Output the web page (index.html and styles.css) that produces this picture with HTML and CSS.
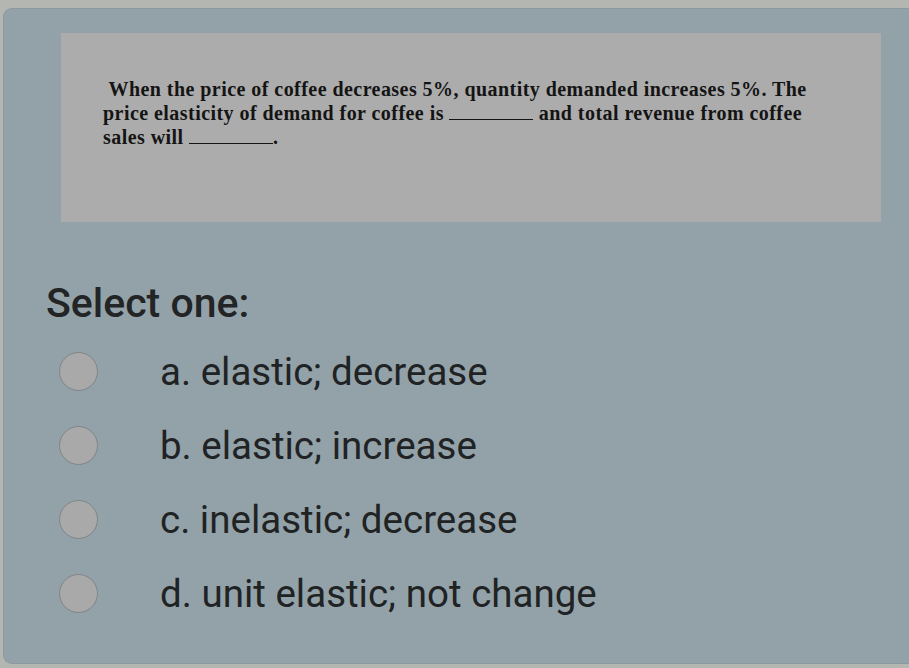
FILE: index.html
```html
<!DOCTYPE html>
<html>
<head>
<meta charset="utf-8">
<link rel="stylesheet" href="styles.css">
</head>
<body>
<div class="panel">
  <div class="qbox">
    <p class="qtext">&nbsp;When the price of coffee decreases 5%, quantity demanded increases 5%. The price elasticity of demand for coffee is <span class="blank"></span> and total revenue from coffee sales will <span class="blank"></span>.</p>
  </div>
  <div class="prompt">Select one:</div>
  <div class="options">
    <label class="opt"><span class="radio"></span><span class="otext">a. elastic; decrease</span></label>
    <label class="opt"><span class="radio"></span><span class="otext">b. elastic; increase</span></label>
    <label class="opt"><span class="radio"></span><span class="otext">c. inelastic; decrease</span></label>
    <label class="opt"><span class="radio"></span><span class="otext">d. unit elastic; not change</span></label>
  </div>
</div>
</body>
</html>
```
FILE: styles.css
```css
html, body {
  margin: 0;
  padding: 0;
  background: #b4b6b1;
  height: 668px;
  overflow: hidden;
}
body {
  padding-top: 8px;
  padding-left: 3px;
  box-sizing: border-box;
}
.panel {
  background: #93a2a8;
  border: 1px solid #8b9a9f;
  border-right: none;
  border-radius: 9px 0 0 9px;
  height: 656px;
  box-sizing: border-box;
  padding: 24px 0 0 57px;
}
.qbox {
  width: 820px;
  height: 189px;
  background: #acacac;
  box-sizing: border-box;
  padding: 44px 50px 0 42px;
}
.qtext {
  margin: 0;
  font-family: "Liberation Serif", "Times New Roman", serif;
  font-weight: bold;
  font-size: 20px;
  letter-spacing: 0.45px;
  line-height: 24px;
  color: #141414;
}
.blank {
  display: inline-block;
  width: 84px;
  height: 1px;
  border-bottom: 1px solid #141414;
  vertical-align: baseline;
}
.prompt {
  margin-top: 57px;
  margin-left: -15px;
  font-family: Roboto, "Liberation Sans", sans-serif;
  font-size: 41px;
  line-height: 48px;
  font-weight: 500;
  color: #222426;
}
.options {
  display: flex;
  flex-direction: column;
  margin-top: 7px;
  margin-left: -2px;
}
.opt {
  display: flex;
  align-items: center;
  height: 74px;
}
.radio {
  width: 37px;
  height: 37px;
  border-radius: 50%;
  background: #a9a9a9;
  border: 1px solid #7f8589;
  flex: none;
}
.otext {
  margin-left: 62px;
  font-family: Roboto, "Liberation Sans", sans-serif;
  font-size: 38.5px;
  color: #202224;
}
```
